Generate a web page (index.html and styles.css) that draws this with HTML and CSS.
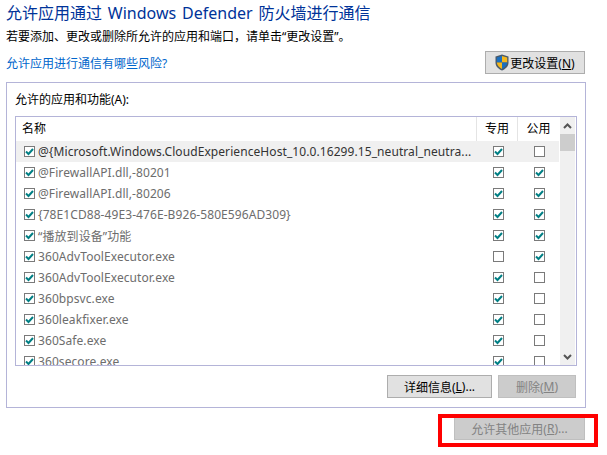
FILE: index.html
```html
<!DOCTYPE html>
<html lang="zh-CN">
<head>
<meta charset="utf-8">
<title>允许的应用</title>
<link rel="stylesheet" href="styles.css">
</head>
<body>
<main class="page">
  <h1 class="title">允许应用通过 Windows Defender 防火墙进行通信</h1>
  <p class="subtitle">若要添加、更改或删除所允许的应用和端口，请单击“更改设置”。</p>
  <div class="toprow">
    <a class="risk" href="#">允许应用进行通信有哪些风险?</a>
    <button class="btn change">
      <svg class="shield" width="14" height="17" viewBox="0 0 14 17">
        <path d="M7 .5 13.5 2.5V8.5C13.5 12.5 10.5 15 7 16.5 3.500 15 .5 12.500 .5 8.500V2.500Z" fill="#4a5a6a"/>
        <path d="M7 2 7 8.500H12.200V3.500Z" fill="#f4b71c"/>
        <path d="M7 2 1.800 3.500V8.500H7Z" fill="#1a6fc0"/>
        <path d="M7 8.500H1.800C2 11.500 4.200 13.600 7 15Z" fill="#f4b71c"/>
        <path d="M7 8.500H12.200C12 11.500 9.800 13.600 7 15Z" fill="#1a6fc0"/>
      </svg>
      <span>更改设置(<u>N</u>)</span>
    </button>
  </div>
  <section class="panel">
    <div class="panel-label">允许的应用和功能(A):</div>
    <div class="listbox">
      <div class="listmain">
        <div class="head">
          <div class="col-name">名称</div>
          <div class="head-cell">专用</div>
          <div class="head-cell last">公用</div>
        </div>
        <div class="rows">
          <div class="row selected"><span class="box on"></span><span class="name">@{Microsoft.Windows.CloudExperienceHost_10.0.16299.15_neutral_neutra...</span><span class="box on"></span><span class="box"></span></div>
          <div class="row"><span class="box on"></span><span class="name">@FirewallAPI.dll,-80201</span><span class="box on"></span><span class="box on"></span></div>
          <div class="row"><span class="box on"></span><span class="name">@FirewallAPI.dll,-80206</span><span class="box on"></span><span class="box on"></span></div>
          <div class="row"><span class="box on"></span><span class="name">{78E1CD88-49E3-476E-B926-580E596AD309}</span><span class="box on"></span><span class="box on"></span></div>
          <div class="row"><span class="box on"></span><span class="name">“播放到设备”功能</span><span class="box on"></span><span class="box on"></span></div>
          <div class="row"><span class="box on"></span><span class="name">360AdvToolExecutor.exe</span><span class="box"></span><span class="box on"></span></div>
          <div class="row"><span class="box on"></span><span class="name">360AdvToolExecutor.exe</span><span class="box on"></span><span class="box"></span></div>
          <div class="row"><span class="box on"></span><span class="name">360bpsvc.exe</span><span class="box on"></span><span class="box"></span></div>
          <div class="row"><span class="box on"></span><span class="name">360leakfixer.exe</span><span class="box on"></span><span class="box"></span></div>
          <div class="row"><span class="box on"></span><span class="name">360Safe.exe</span><span class="box on"></span><span class="box"></span></div>
          <div class="row"><span class="box on"></span><span class="name">360secore.exe</span><span class="box on"></span><span class="box"></span></div>
        </div>
      </div>
      <div class="scrollbar">
        <svg class="arrow" width="9" height="6" viewBox="0 0 9 6"><path d="M1 5 4.500 1.500 8 5" fill="none" stroke="#555" stroke-width="2"/></svg>
        <div class="thumb"></div>
        <div class="track"></div>
        <svg class="arrow" width="9" height="6" viewBox="0 0 9 6"><path d="M1 1 4.500 4.500 8 1" fill="none" stroke="#555" stroke-width="2"/></svg>
      </div>
    </div>
    <div class="panel-actions">
      <button class="btn details">详细信息(<u>L</u>)...</button>
      <button class="btn remove" disabled>删除(<u>M</u>)</button>
    </div>
  </section>
  <div class="bottomrow">
    <button class="btn other" disabled>允许其他应用(<u>R</u>)...</button>
  </div>
  <div class="highlight"></div>
</main>
</body>
</html>
```
FILE: styles.css
```css
* { box-sizing: border-box; }
html, body { margin: 0; padding: 0; background: #fff; }
body { width: 607px; height: 455px; overflow: hidden; }
.page {
  position: relative;
  width: 607px;
  height: 455px;
  padding: 0 22px 0 6px;
  font-family: "Noto Sans", "Noto Sans CJK SC", sans-serif;
  font-size: 12px;
  color: #000;
}
.title {
  margin: 0;
  height: 28px;
  line-height: 26px;
  font-size: 16px;
  font-weight: 400;
  word-spacing: 1.7px;
  color: #003399;
  white-space: nowrap;
}
.subtitle {
  margin: 0;
  height: 23px;
  line-height: 18px;
  font-size: 12px;
  white-space: nowrap;
}
.toprow {
  display: flex;
  justify-content: space-between;
  align-items: flex-start;
  height: 31px;
}
.risk {
  margin-top: 3px;
  line-height: 20px;
  color: #0066cc;
  text-decoration: none;
}
.btn {
  font: inherit;
  height: 23px;
  padding: 0;
  border: 1px solid #adadad;
  background: #e1e1e1;
  color: #000;
  display: flex;
  align-items: center;
  justify-content: center;
}
.btn[disabled] { background: #cccccc; border-color: #bfbfbf; color: #838383; }
.change { width: 100px; gap: 1px; }
.shield { flex: none; }
.panel {
  height: 326px;
  margin-right: -1px;
  border: 1px solid #b4b4d8;
  padding: 0 8px;
}
.panel-label { height: 33px; padding-top: 7px; line-height: 20px; }
.listbox {
  display: flex;
  height: 250px;
  border: 1px solid #b4b4d8;
  overflow: hidden;
}
.listmain { width: 543px; flex: none; }
.head { display: flex; height: 24px; align-items: stretch; line-height: 24px; }
.col-name { width: 460px; padding-left: 6px; }
.head-cell { width: 41px; flex: none; text-align: center; border-left: 1px solid #e4e4e4; }
.head-cell.last { width: 42px; }
.rows { display: flex; flex-direction: column; }
.row { display: flex; align-items: center; height: 21px; flex: none; padding-left: 8px; }
.row.selected { background: #f0f0f0; }
.name {
  width: 458px;
  flex: none;
  padding-left: 3px;
  letter-spacing: 0.08px;
  color: #6d6d6d;
  white-space: nowrap;
  overflow: hidden;
}
.row.selected .name { color: #333; }
.box {
  flex: none;
  width: 11px;
  height: 11px;
  border: 1px solid #7a7a7a;
  background: #fff center / 9px 9px no-repeat;
}
.name + .box + .box { margin-left: 30px; }
.box.on {
  background-image: url("data:image/svg+xml,%3Csvg xmlns='http://www.w3.org/2000/svg' viewBox='0 0 9 9'%3E%3Cpath d='M1 4.500 3.500 7 8 2' fill='none' stroke='%23007f84' stroke-width='2'/%3E%3C/svg%3E");
}
.scrollbar {
  width: 15px;
  flex: none;
  margin: 0 1px;
  background: #f0f0f0;
  display: flex;
  flex-direction: column;
  align-items: center;
}
.arrow { flex: none; margin: 6px 0 5px; }
.thumb { width: 100%; height: 17px; background: #cdcdcd; flex: none; }
.track { flex: 1; }
.panel-actions {
  display: flex;
  justify-content: flex-end;
  gap: 6px;
  margin: 9px 1px 0 0;
}
.details { width: 105px; }
.remove { width: 78px; }
.bottomrow { display: flex; justify-content: flex-end; margin-top: 9px; }
.other { width: 131px; }
.highlight {
  position: absolute;
  left: 438px;
  top: 414px;
  width: 160px;
  height: 33px;
  border: 4px solid #ff0000;
  pointer-events: none;
}
```
